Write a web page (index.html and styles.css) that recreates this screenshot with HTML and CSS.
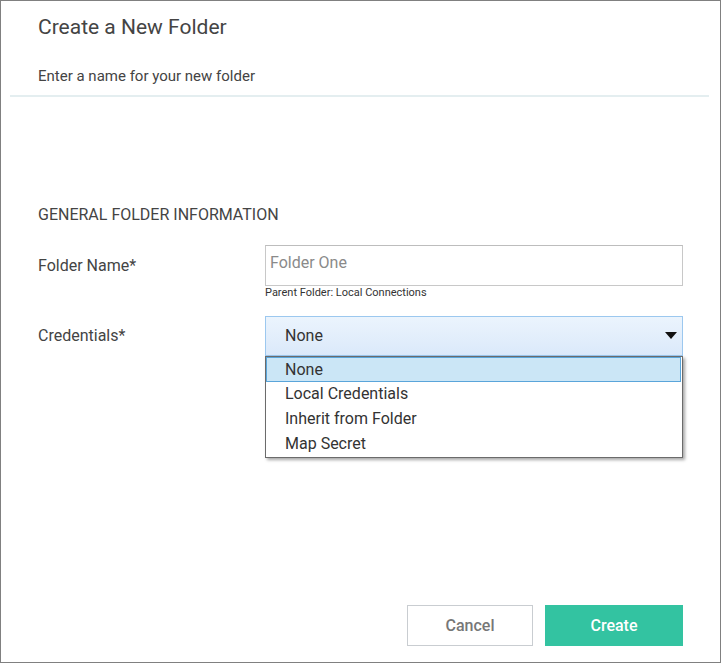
FILE: index.html
```html
<!DOCTYPE html>
<html>
<head>
<meta charset="utf-8">
<link rel="stylesheet" href="styles.css">
</head>
<body>
<div class="dialog">
  <div class="header">
    <h1 class="title">Create a New Folder</h1>
    <div class="subtitle">Enter a name for your new folder</div>
  </div>
  <div class="divider"></div>
  <div class="section">
    <div class="section-title">GENERAL FOLDER INFORMATION</div>
    <div class="row row-name">
      <div class="label">Folder Name*</div>
      <div class="field">
        <div class="input">Folder One</div>
        <div class="hint">Parent Folder: Local Connections</div>
      </div>
    </div>
    <div class="row row-cred">
      <div class="label label-cred">Credentials*</div>
      <div class="field field-select">
        <div class="select">
          <span>None</span>
          <span class="caret"></span>
        </div>
        <ul class="menu">
          <li class="item item-active">None</li>
          <li class="item">Local Credentials</li>
          <li class="item">Inherit from Folder</li>
          <li class="item">Map Secret</li>
        </ul>
      </div>
    </div>
  </div>
  <div class="footer">
    <button class="btn btn-cancel">Cancel</button>
    <button class="btn btn-create">Create</button>
  </div>
</div>
</body>
</html>
```
FILE: styles.css
```css
html, body {
  margin: 0;
  padding: 0;
  background: #fff;
}
body {
  font-family: Roboto, "Liberation Sans", sans-serif;
}
.dialog {
  box-sizing: border-box;
  width: 721px;
  height: 663px;
  border: 1px solid #808080;
  display: flex;
  flex-direction: column;
  background: #fff;
  color: #444;
}
.header {
  padding: 14px 0 0 37px;
}
.title {
  margin: 0;
  font-size: 21px;
  line-height: 24px;
  font-weight: 400;
  color: #444;
}
.subtitle {
  margin-top: 27px;
  font-size: 15px;
  line-height: 20px;
  color: #444;
}
.divider {
  margin: 9px 11px 0 9px;
  height: 2px;
  background: #e4eef0;
}
.section {
  padding: 0 37px 0 37px;
}
.section-title {
  margin-top: 108px;
  font-size: 16px;
  line-height: 20px;
  color: #444;
}
.row {
  display: flex;
}
.row-name {
  margin-top: 20px;
}
.row-cred {
  margin-top: 17px;
}
.label {
  width: 227px;
  font-size: 16px;
  line-height: 41px;
  color: #444;
}
.label-cred {
  line-height: 39px;
}
.field {
  width: 418px;
}
.field-select {
  position: relative;
}
.input {
  box-sizing: border-box;
  height: 41px;
  border: 1px solid #c8c8c8;
  border-top-color: #bdbdbd;
  padding: 6px 4px;
  font-size: 16px;
  line-height: 22px;
  color: #8a8a8a;
}
.hint {
  font-size: 11px;
  line-height: 13px;
  color: #333;
}
.select {
  box-sizing: border-box;
  height: 40px;
  border: 1px solid #9cc8ef;
  background: linear-gradient(#ebf4fd, #dbe9fa);
  display: flex;
  align-items: center;
  justify-content: space-between;
  padding: 0 5px 1px 19px;
  font-size: 16px;
  color: #333;
}
.caret {
  width: 0;
  height: 0;
  border-left: 6px solid transparent;
  border-right: 6px solid transparent;
  border-top: 7px solid #111;
}
.menu {
  position: absolute;
  top: 40px;
  left: 0;
  box-sizing: border-box;
  width: 418px;
  margin: 0;
  padding: 0;
  list-style: none;
  background: #fff;
  border: 1px solid #6b6b6b;
  box-shadow: 2px 2px 3px rgba(0, 0, 0, 0.35);
}
.item {
  height: 25px;
  line-height: 24px;
  padding-left: 19px;
  font-size: 16px;
  color: #333;
}
.item-active {
  box-sizing: border-box;
  height: 25px;
  line-height: 23px;
  margin-right: 1px;
  padding-left: 18px;
  border: 1px solid #5aa5da;
  background: #cbe6f6;
}
.footer {
  margin-top: auto;
  display: flex;
  justify-content: flex-end;
  gap: 12px;
  padding: 0 37px 16px 0;
}
.btn {
  box-sizing: border-box;
  height: 41px;
  font-family: Roboto, "Liberation Sans", sans-serif;
  font-size: 16px;
  font-weight: 500;
  cursor: pointer;
}
.btn-cancel {
  width: 126px;
  background: #fff;
  border: 1px solid #c9cdd1;
  color: #777;
}
.btn-create {
  width: 138px;
  background: #33c3a1;
  border: none;
  color: #fff;
}
```
